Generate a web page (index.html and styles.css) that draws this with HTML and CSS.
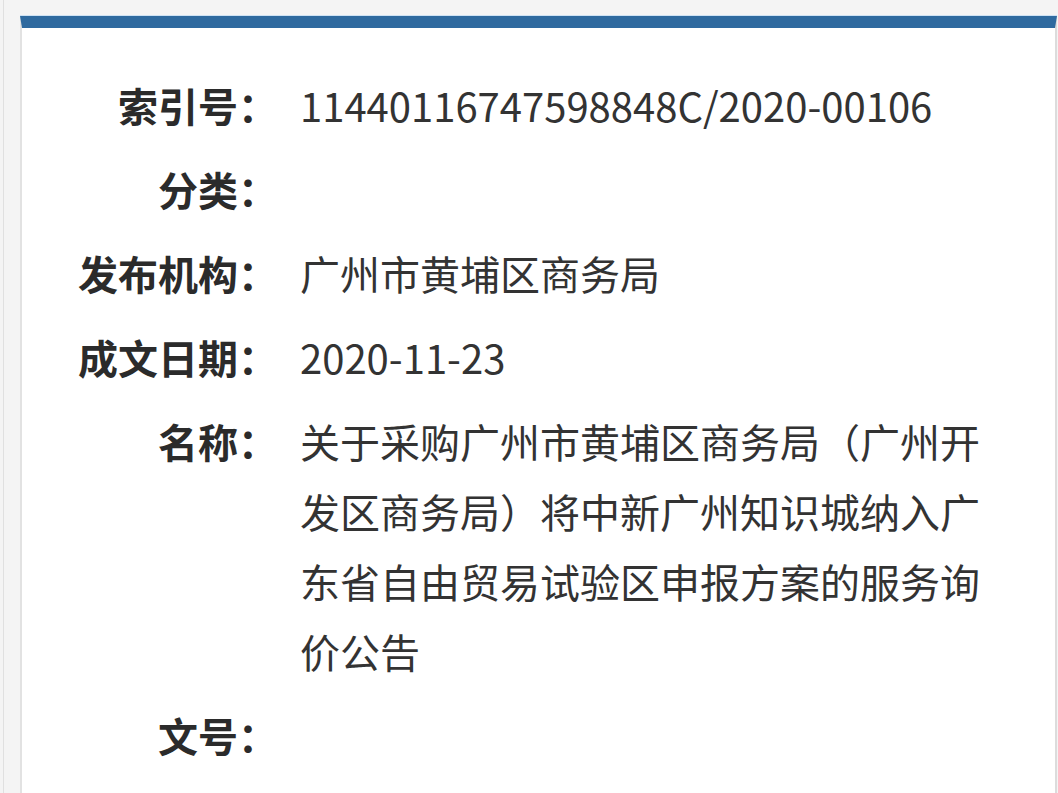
FILE: index.html
```html
<!DOCTYPE html>
<html lang="zh-CN">
<head>
<meta charset="utf-8">
<title>信息公开</title>
<link rel="stylesheet" href="styles.css">
</head>
<body>
<div class="frame">
  <div class="card">
    <div class="info">
      <div class="row"><div class="label">索引号：</div><div class="value">11440116747598848C/2020-00106</div></div>
      <div class="row"><div class="label">分类：</div><div class="value"></div></div>
      <div class="row"><div class="label">发布机构：</div><div class="value">广州市黄埔区商务局</div></div>
      <div class="row"><div class="label">成文日期：</div><div class="value">2020-11-23</div></div>
      <div class="row"><div class="label">名称：</div><div class="value">关于采购广州市黄埔区商务局（广州开发区商务局）将中新广州知识城纳入广东省自由贸易试验区申报方案的服务询价公告</div></div>
      <div class="row"><div class="label">文号：</div><div class="value"></div></div>
    </div>
  </div>
</div>
</body>
</html>
```

FILE: styles.css
```css
html, body {
  margin: 0;
  padding: 0;
  background: #f4f4f4;
  height: 100%;
  overflow: hidden;
}
body {
  font-family: "Noto Sans CJK SC", "Noto Sans", sans-serif;
  color: #333;
}
.frame {
  margin-left: 3px;
  border-left: 1px solid #e0e0e0;
  padding: 16px 1px 0 16px;
  height: 100%;
  box-sizing: border-box;
}
.card {
  background: #fff;
  border-left: 2px solid #e2e2e2;
  border-right: 2px solid #dcdcdc;
  border-top: 12px solid #2f6a9f;
  box-shadow: 0 -1px 0 #cfe2f3;
  height: 100%;
  padding: 35px 52px 0 0;
  box-sizing: border-box;
}
.info {
  display: flex;
  flex-direction: column;
}
.row {
  display: grid;
  grid-template-columns: 256px 700px;
  column-gap: 22px;
  padding: 7px 0;
  font-size: 40px;
  line-height: 70px;
}
.label {
  text-align: right;
  font-weight: 700;
  color: #2b2b2b;
  white-space: nowrap;
}
.value {
  color: #333;
  min-height: 70px;
}
```
